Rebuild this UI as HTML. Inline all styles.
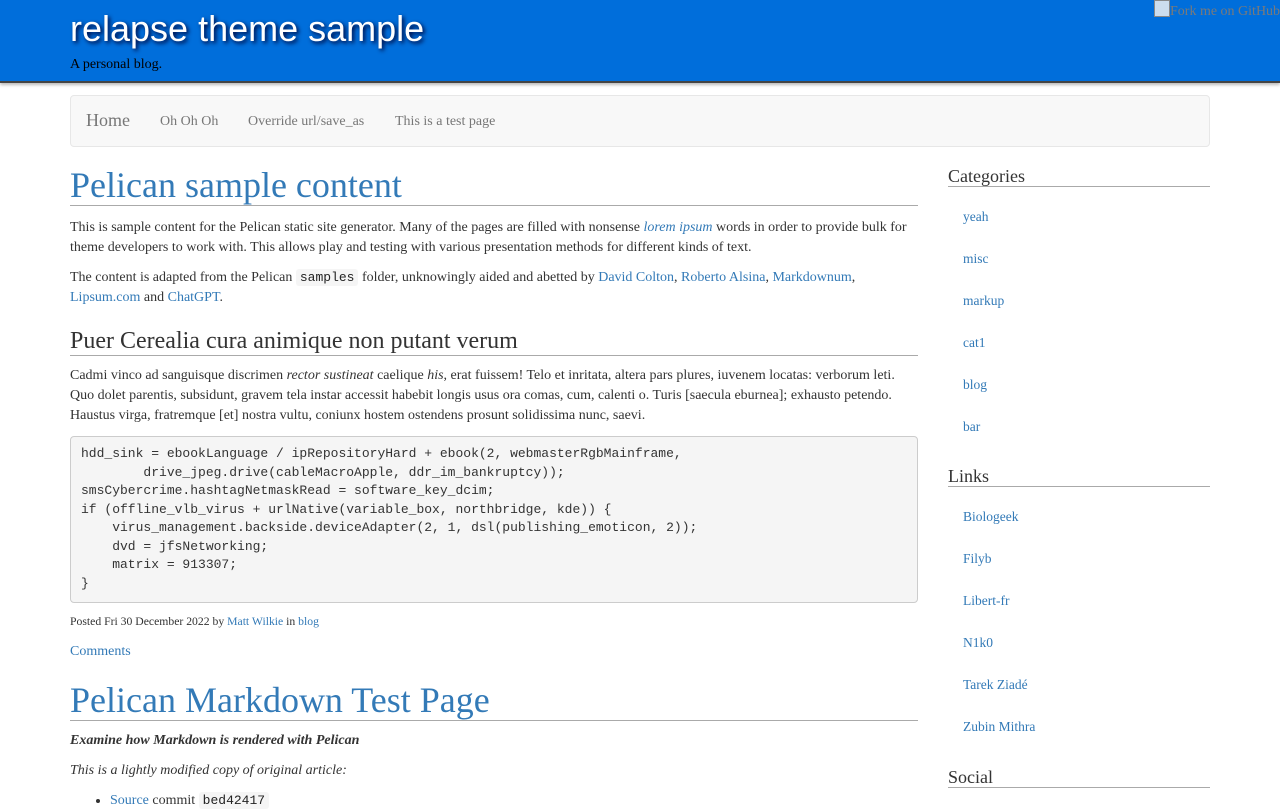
<!DOCTYPE html>
<html><head><meta charset="utf-8"><style>
body{margin:0;font-family:"Liberation Serif",serif;font-size:14px;line-height:20px;color:#333;background:#fff;overflow:hidden;width:1280px;height:800px}
a{color:#337ab7;text-decoration:none}
.hdr{background:#006edb;height:81px;border-bottom:2px solid #444;box-shadow:0 2px 3px #bbb;position:relative}
.hdr h1{margin:0;position:absolute;left:70px;top:7px;font-family:"Liberation Sans",sans-serif;font-weight:normal;font-size:36px;line-height:44px;color:#fff;text-shadow:2px 2px 4px #003}
.hdr .sub{position:absolute;left:70px;top:55px;font-size:14px;color:#000}
.fork{position:absolute;left:1154px;top:0;color:#7a7a7a;font-size:14px;line-height:20px;white-space:nowrap}
.fork i{display:inline-block;width:14px;height:15px;background:#cde;border:1px solid #888;vertical-align:-2px}
.nav{position:absolute;left:70px;top:95px;width:1138px;height:50px;background:#f8f8f8;border:1px solid #e7e7e7;border-radius:4px}
.nav span{position:absolute;top:16px;color:#777;font-size:14px}
.main{position:absolute;left:70px;top:161px;width:848px}
.side{position:absolute;left:948px;top:166px;width:262px}
h2.t{font-weight:normal;font-size:36px;line-height:40px;margin:4px 0 0;border-bottom:1px solid #aaa;padding-bottom:0;color:#337ab7}
h3{font-weight:normal;font-size:24px;line-height:28px;margin:0;border-bottom:1px solid #aaa;color:#333}
p{margin:0 0 10px}
code{font-family:"Liberation Mono",monospace;font-size:13px;background:#f5f5f5;padding:1px 4px;border-radius:3px;color:#222}
pre{font-family:"Liberation Mono",monospace;font-size:13px;line-height:18.5px;background:#f5f5f5;border:1px solid #ccc;border-radius:4px;padding:8px 10px 9px;margin:0;color:#333}
.side h4{font-weight:normal;font-size:18px;line-height:20px;margin:0;border-bottom:1px solid #aaa;color:#333}
.side ul{list-style:none;margin:0;padding:0}
.side li{height:42px;line-height:42px;padding-left:15px;font-size:13.5px}
</style></head><body>
<div class="hdr"><h1>relapse theme sample</h1><div class="sub">A personal blog.</div><div class="fork"><i></i>Fork me on GitHub</div></div>
<div class="nav"><span style="left:15px;top:14px;font-size:18px">Home</span><span style="left:89px">Oh Oh Oh</span><span style="left:177px">Override url/save_as</span><span style="left:324px">This is a test page</span></div>
<div class="main">
<h2 class="t">Pelican sample content</h2>
<div style="height:12px"></div>
<p>This is sample content for the Pelican static site generator. Many of the pages are filled with nonsense <a><i>lorem ipsum</i></a> words in order to provide bulk for theme developers to work with. This allows play and testing with various presentation methods for different kinds of text.</p>
<p>The content is adapted from the Pelican <code>samples</code> folder, unknowingly aided and abetted by <a>David Colton</a>, <a>Roberto Alsina</a>, <a>Markdownum</a>, <a>Lipsum.com</a> and <a>ChatGPT</a>.</p>
<div style="height:9px"></div>
<h3>Puer Cerealia cura animique non putant verum</h3>
<div style="height:10px"></div>
<p>Cadmi vinco ad sanguisque discrimen <i>rector sustineat</i> caelique <i>his</i>, erat fuissem! Telo et inritata, altera pars plures, iuvenem locatas: verborum leti. Quo dolet parentis, subsidunt, gravem tela instar accessit habebit longis usus ora comas, cum, calenti o. Turis [saecula eburnea]; exhausto petendo. Haustus virga, fratremque [et] nostra vultu, coniunx hostem ostendens prosunt solidissima nunc, saevi.</p>
<pre>hdd_sink = ebookLanguage / ipRepositoryHard + ebook(2, webmasterRgbMainframe,
        drive_jpeg.drive(cableMacroApple, ddr_im_bankruptcy));
smsCybercrime.hashtagNetmaskRead = software_key_dcim;
if (offline_vlb_virus + urlNative(variable_box, northbridge, kde)) {
    virus_management.backside.deviceAdapter(2, 1, dsl(publishing_emoticon, 2));
    dvd = jfsNetworking;
    matrix = 913307;
}</pre>
<div style="font-size:11.7px;margin-top:9px;line-height:20px">Posted Fri 30 December 2022 by <a>Matt Wilkie</a> in <a>blog</a></div>
<div style="margin-top:10px;line-height:20px"><a>Comments</a></div>
<div style="height:18px"></div>
<h2 class="t" style="margin-top:0">Pelican Markdown Test Page</h2>
<div style="height:10px"></div>
<p><b><i>Examine how Markdown is rendered with Pelican</i></b></p>
<p><i>This is a lightly modified copy of original article:</i></p>
<ul style="margin:0;padding-left:40px"><li><a>Source</a> commit <code>bed42417</code></li></ul>
</div>
<div class="side">
<h4>Categories</h4>
<ul style="margin-top:9px"><li><a>yeah</a></li><li><a>misc</a></li><li><a>markup</a></li><li><a>cat1</a></li><li><a>blog</a></li><li><a>bar</a></li></ul>
<div style="height:18px"></div>
<h4>Links</h4>
<ul style="margin-top:9px"><li><a>Biologeek</a></li><li><a>Filyb</a></li><li><a>Libert-fr</a></li><li><a>N1k0</a></li><li><a>Tarek Ziadé</a></li><li><a>Zubin Mithra</a></li></ul>
<div style="height:19px"></div>
<h4>Social</h4>
</div>
</body></html>
